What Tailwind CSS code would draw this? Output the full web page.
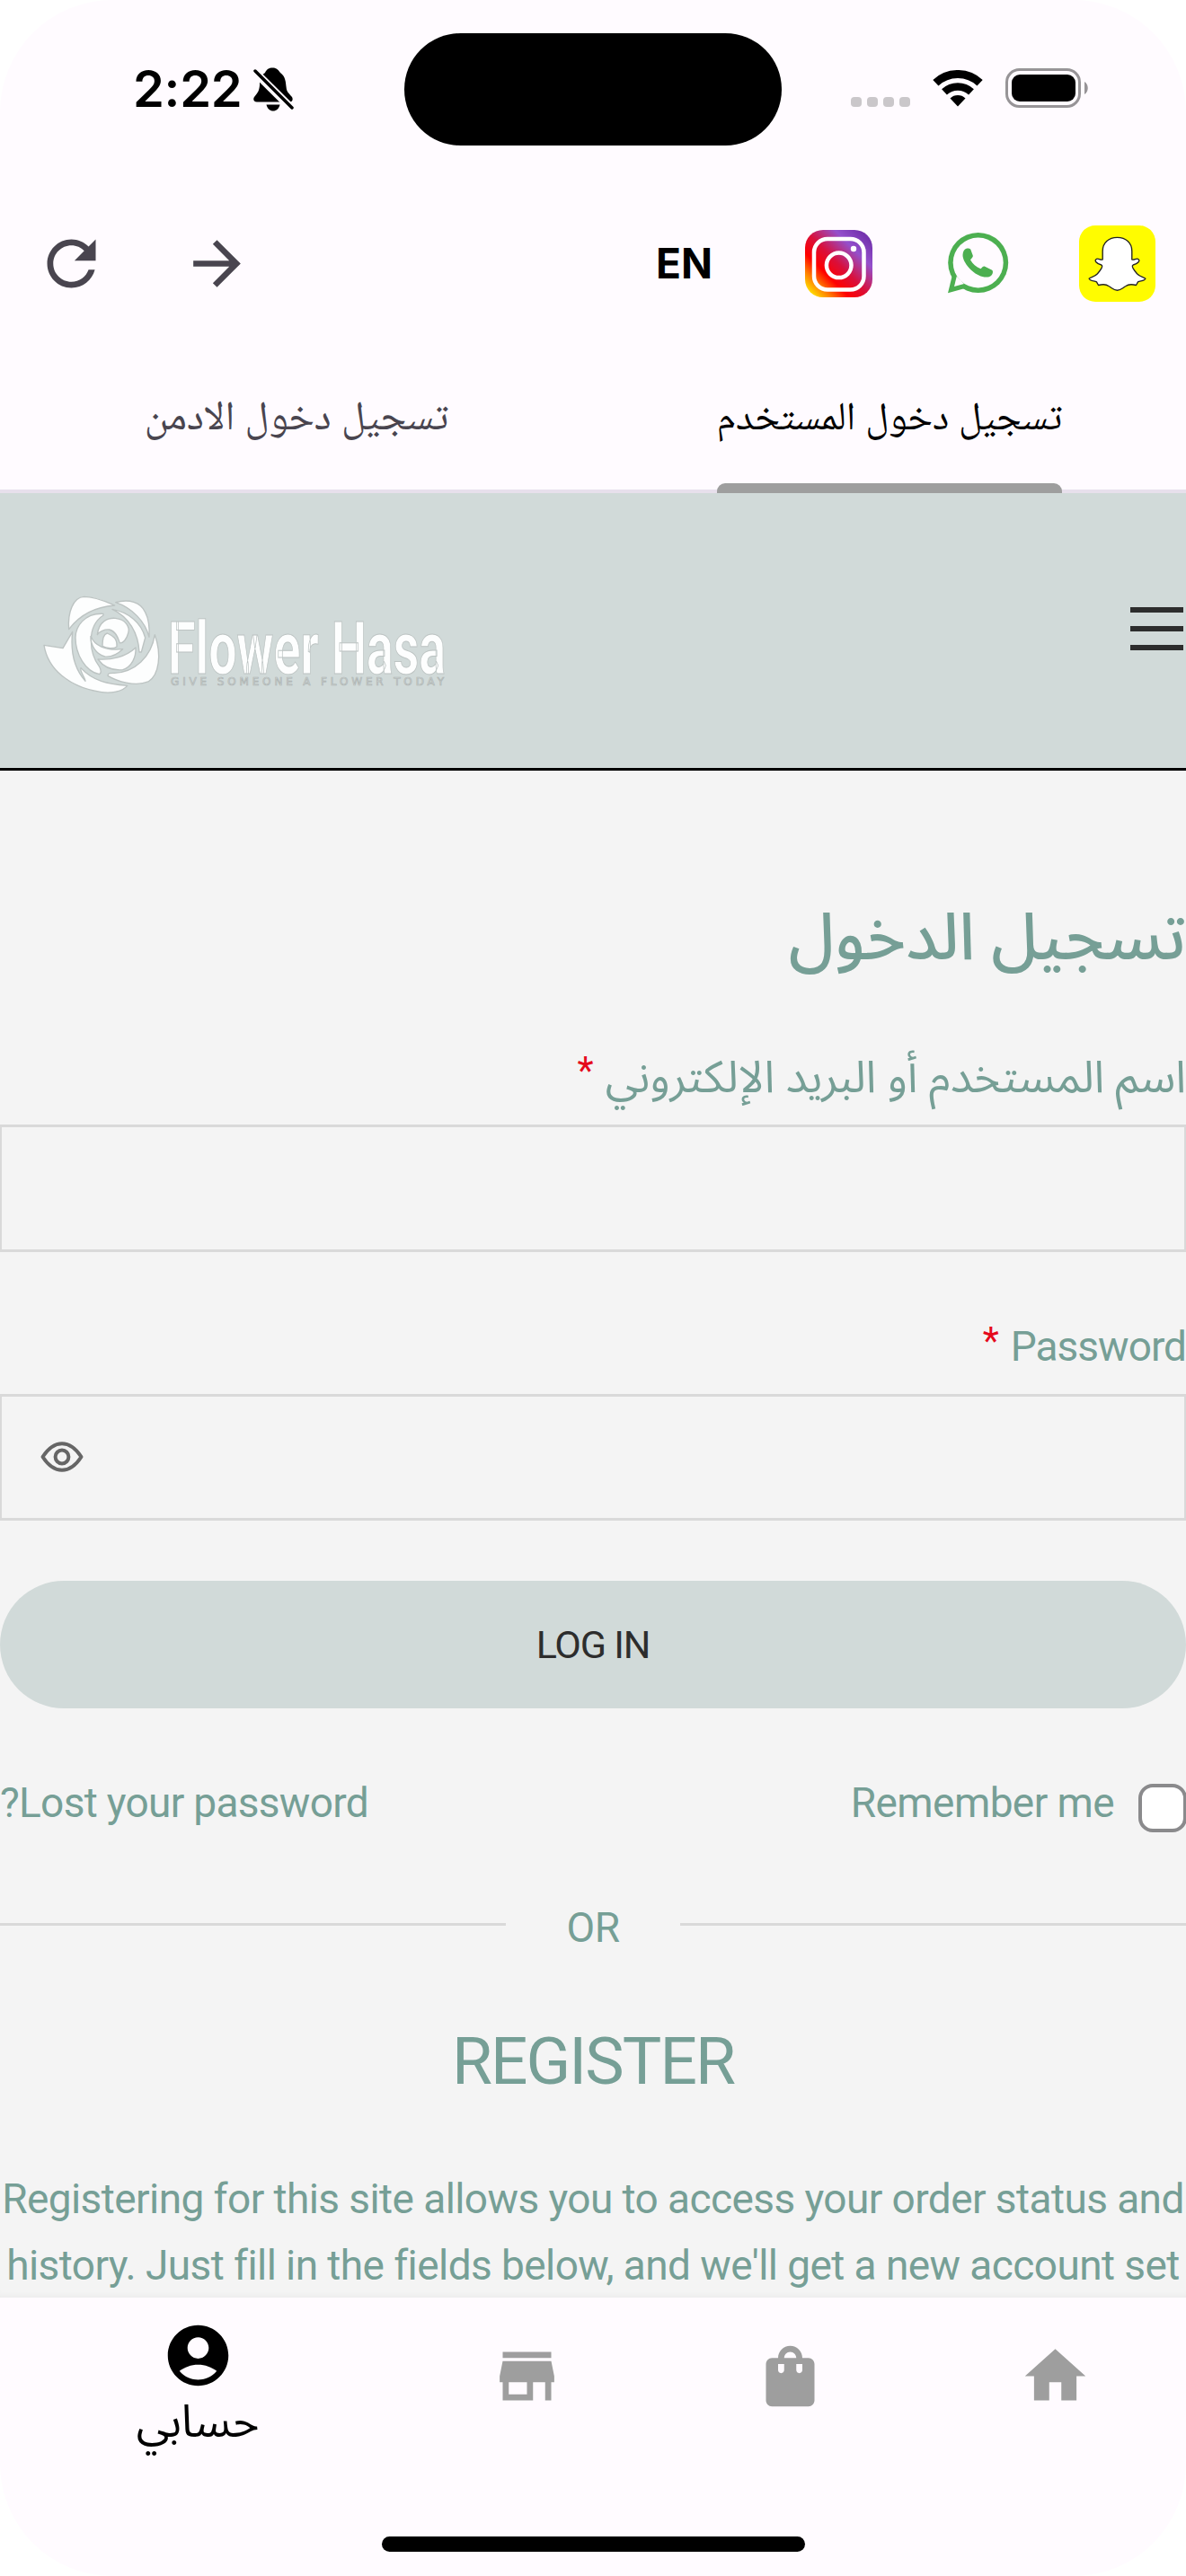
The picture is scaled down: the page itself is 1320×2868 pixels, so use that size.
<!DOCTYPE html>
<html lang="ar" dir="rtl">
<head>
  <meta charset="UTF-8">
  <title>Flower Hasa</title>
  <script src="https://cdn.jsdelivr.net/npm/@tailwindcss/browser@4"></script>
</head>
<body class="bg-white font-['Roboto','Noto_Sans_Arabic','DejaVu_Sans',sans-serif]">

  <div class="w-[1320px] h-[2868px] flex flex-col overflow-hidden rounded-[125px] bg-[#fffbff]">

    <!-- Status bar -->
    <div dir="ltr" class="h-[199px] shrink-0 flex items-center">
      <div class="w-[450px] pl-[148px] flex items-center">
        <span class="w-[134px] text-[56px] leading-[56px] font-semibold font-['Inter',sans-serif] tracking-[-0.3px] -mt-[2px]">2:22</span>
        <svg class="w-[46px] h-[50px]" viewBox="0 0 46 50">
          <path d="M21.5.5c4.500 0 6.500 2.500 8.500 5.500 6 4 6 11 6.600 16 .4 6 3.400 7 6.400 11 2 4-1 5.500-3 5.500H4c-4 0-4.500-3.500-3-5.500 4-5 5.500-7 6-13 0-8 1-11 6-14C15 2 17 .5 21.500 .5z"/>
          <path d="M14.500 41.500h15c-1 4.500-4 7-7.500 7s-6.500-2.500-7.500-7z"/>
          <path d="M-1 2.500 44 47" stroke="#fffbff" stroke-width="9"/>
          <path d="M2 4 43 45" stroke="#000" stroke-width="3.500" stroke-linecap="round"/>
        </svg>
      </div>
      <div class="w-[420px] h-[125px] rounded-full bg-black"></div>
      <div class="w-[450px] pl-[77px] flex items-center -mt-[3px]">
        <div class="flex gap-[6.500px] mt-[31px]">
          <i class="w-[11.5px] h-[11.5px] rounded-[4px] bg-[#cac7ca]"></i>
          <i class="w-[11.5px] h-[11.5px] rounded-[4px] bg-[#cac7ca]"></i>
          <i class="w-[11.5px] h-[11.5px] rounded-[4px] bg-[#cac7ca]"></i>
          <i class="w-[11.5px] h-[11.5px] rounded-[4px] bg-[#cac7ca]"></i>
        </div>
        <svg class="w-[56px] h-[41px] ml-[25px]" viewBox="0 0 56 41" fill="none" stroke="#000">
          <path d="M3.400 14.200a36 36 0 0 1 49.200 0" stroke-width="9"/>
          <path d="M13 24.400a22 22 0 0 1 30 0" stroke-width="8.500"/>
          <path d="M28 40.500l-8.500-9.100a12.500 12.500 0 0 1 17 0z" fill="#000" stroke="none"/>
        </svg>
        <svg class="w-[93px] h-[44px] ml-[25px]" viewBox="0 0 93 44">
          <rect x="1.500" y="1.500" width="81" height="41" rx="14" fill="none" stroke="#979497" stroke-width="3"/>
          <rect x="7" y="7" width="71" height="30" rx="9"/>
          <path d="M88 15c5 3 5 11 0 14z" fill="#979497"/>
        </svg>
      </div>
    </div>

    <!-- Toolbar -->
    <div dir="ltr" class="h-[188px] shrink-0 flex items-center pl-[39px] pr-[34px]">
      <svg class="w-[81px] h-[81px]" viewBox="0 0 24 24" fill="#49454f"><path d="M17.650 6.350C16.200 4.900 14.210 4 12 4c-4.420 0-7.990 3.580-7.990 8s3.570 8 7.990 8c3.730 0 6.840-2.550 7.730-6h-2.080c-.82 2.330-3.040 4-5.650 4-3.310 0-6-2.690-6-6s2.690-6 6-6c1.660 0 3.140.69 4.220 1.780L13 11h7V4l-2.350 2.350z"/></svg>
      <svg class="w-[79px] h-[79px] ml-[82px]" viewBox="0 0 24 24" fill="#49454f"><path d="M12 4l-1.410 1.410L16.170 11H4v2h12.170l-5.580 5.590L12 20l8-8z"/></svg>
      <span class="ml-auto mr-[103px] text-[46px] leading-none font-bold font-['Inter',sans-serif]">EN</span>
      <!-- Instagram -->
      <svg class="w-[75px] h-[75px]" viewBox="0 0 75 75" fill="none">
        <defs>
          <linearGradient id="insta" x1="0" y1="1" x2="1" y2="0">
            <stop offset="0.080" stop-color="#ffd800"/>
            <stop offset="0.200" stop-color="#ff7a00"/>
            <stop offset="0.330" stop-color="#ff0000"/>
            <stop offset="0.500" stop-color="#d8103c"/>
            <stop offset="0.720" stop-color="#9450cc"/>
            <stop offset="0.900" stop-color="#7434ae"/>
          </linearGradient>
        </defs>
        <rect width="75" height="75" rx="20" fill="url(#insta)"/>
        <rect x="10" y="10" width="55.500" height="56.500" rx="15" stroke="#fff" stroke-width="4.500"/>
        <circle cx="37.700" cy="39.300" r="13.800" stroke="#fff" stroke-width="4.500"/>
        <circle cx="54" cy="21" r="3.200" fill="#fff"/>
      </svg>
      <!-- WhatsApp -->
      <svg class="w-[68px] h-[68px] ml-[84px]" viewBox="0 0 68 68" fill="#4caf50">
        <circle cx="33.700" cy="33.500" r="33.500"/>
        <path d="M0 67.300 5 47l14 15z"/>
        <circle cx="33.700" cy="33.500" r="28" fill="#fffbff"/>
        <path d="M9.800 48.500 7 60l11-3z" fill="#fffbff"/>
        <path d="M16.500 25c0-4 2-6.500 4-7.200 2-.6 3.700-.3 4.700.7l2.600 7c.4 1.500-.8 2.500-2.800 4.700 2.500 4.500 6.500 8 11.500 10 2-2 3-3.500 4.700-2.500l8 4c1.300.8 1 4-.7 5.800-2.500 2.500-6.500 2.500-10 1.500C28 46.500 16.500 33.500 16.500 25z"/>
      </svg>
      <!-- Snapchat -->
      <svg class="w-[85px] h-[85px] ml-[78px]" viewBox="964 47 253 253">
        <rect x="964" y="47" width="253" height="253" rx="54" fill="#fffc00"/>
        <path d="M1090.500 87C1062 87 1042 105 1042 132L1042 160C1033 163 1030 155 1022 158C1012 163 1022 174 1038 178C1045 182 1035 195 1025 207C1015 218 1002 218 997 223C1000 232 1015 230 1022 234L1028 245C1040 242 1052 240 1062 248C1075 256 1080 262 1090.500 262C1101 262 1106 256 1119 248C1129 240 1141 242 1153 245L1159 234C1166 230 1181 232 1184 223C1179 218 1166 218 1156 207C1146 195 1136 182 1143 178C1159 174 1169 163 1159 158C1151 155 1148 163 1139 160L1139 132C1139 105 1119 87 1090.500 87Z" fill="#fff" stroke="#222" stroke-width="4" stroke-linejoin="round"/>
      </svg>
    </div>

    <!-- Tabs -->
    <div class="h-[162px] shrink-0 grid grid-cols-2 justify-items-center border-b-4 border-[#e7e0ec] text-[44px] leading-[152px] font-['Roboto','Noto_Naskh_Arabic','DejaVu_Sans',sans-serif]">
      <div class="relative text-black">تسجيل دخول المستخدم
        <span class="absolute inset-x-0 -bottom-1 h-[11px] rounded-t-[9px] bg-[#9e9e9e]"></span>
      </div>
      <div class="text-[#49454f] text-[45.5px]">تسجيل دخول الادمن</div>
    </div>

    <!-- Site header -->
    <div class="h-[309px] shrink-0 flex items-center justify-between bg-[#d1dad9] border-b-[3px] border-black pr-[3px] pl-[40px]">
      <div class="w-[59px] flex flex-col gap-[15px] -mt-[4px]">
        <span class="h-[6px] bg-[#2d2d2d]"></span>
        <span class="h-[6px] bg-[#2d2d2d]"></span>
        <span class="h-[6px] bg-[#2d2d2d]"></span>
      </div>
      <svg class="w-[460px] h-[125px] mt-[31px]" viewBox="0 0 460 125" direction="ltr">
        <g transform="scale(.3333)" fill="#fdfefe" stroke="#bcc3c2" stroke-width="4" stroke-linejoin="round">
          <path d="M110 137C105 80 125 30 160 28C200 28 235 45 263 57C200 62 145 90 110 137Z"/>
          <path d="M266 47C310 35 350 45 365 80C378 105 380 130 378 163C365 110 320 65 266 47Z"/>
          <path d="M255 70C310 80 352 115 365 165L352 213L345 213C342 150 310 95 255 70Z"/>
          <path d="M225 85C160 82 132 130 132 165C132 220 165 278 212 287C222 280 215 268 212 262C180 220 165 130 225 90Z"/>
          <path d="M27 190L90 200L122 145C115 210 125 265 165 310C165 300 145 275 150 266C190 310 240 320 305 325C290 345 250 352 215 346C110 330 40 270 27 190Z"/>
          <path d="M397 155C420 220 412 290 375 312C330 330 270 310 240 292C240 282 250 283 262 283C330 280 385 230 397 155Z"/>
          <path d="M205 155C210 110 240 98 265 100C300 103 315 130 308 150C303 170 290 185 280 182C275 170 270 145 245 138C230 136 210 145 205 155Z"/>
          <path d="M222 193C222 170 228 152 238 150C255 158 272 165 270 195C262 202 235 202 222 193Z"/>
          <path d="M183 160C195 190 230 210 290 203C270 222 250 230 230 228C200 220 182 190 183 160Z"/>
          <path d="M207 237C250 240 300 230 333 198C335 230 320 262 290 272C255 275 225 262 207 237Z"/>
        </g>
        <text x="147" y="94.500" font-size="82" font-weight="700" textLength="309" lengthAdjust="spacingAndGlyphs" fill="#fdfefe" stroke="#bcc3c2" stroke-width="1">Flower Hasa</text>
        <text x="150" y="108" font-size="12" textLength="304" fill="#d8dedd" stroke="#adb3b2" stroke-width=".7" font-family="DejaVu Sans">GIVE SOMEONE A FLOWER TODAY</text>
      </svg>
    </div>

    <!-- Login form -->
    <div class="h-[1700px] shrink-0 overflow-hidden bg-[#f4f4f4] text-[#769f96] text-[46px] leading-[74px] pt-[136px] shadow-[inset_0_-6px_6px_-4px_rgba(0,0,0,0.04)]">
      <h2 class="text-[72.5px] leading-[100px] font-medium">تسجيل الدخول</h2>

      <label class="flex gap-[13px] mt-[68px] text-[49.5px]">اسم المستخدم أو البريد الإلكتروني <span class="text-[#e50a1c] text-[42px] -mt-[7px]">*</span></label>
      <div class="mt-4 h-[142px] border-x-2 border-y-[3px] border-[#d9d9d9]"></div>

      <label class="flex gap-[14px] mt-[68px] h-[74px] tracking-[-1px]">Password <span class="text-[#e50a1c] text-[42px] -mt-[6px]">*</span></label>
      <div class="mt-4 h-[141px] border-x-2 border-y-[3px] border-[#d9d9d9] flex items-center justify-end pl-[43px]">
        <svg class="w-[48px] h-[34px] -mt-[2px]" viewBox="0 0 48 34" fill="none" stroke="#666" stroke-width="4">
          <path d="M2.500 17C9 7 16 2.200 24 2.200S39 7 45.500 17C39 27 32 31.800 24 31.800S9 27 2.500 17z" stroke-linejoin="round"/>
          <circle cx="24" cy="17" r="7.400"/>
        </svg>
      </div>

      <button class="mt-[67px] block w-full h-[142px] rounded-full bg-[#d1dad9] text-[#2d2d2d] text-[43px] leading-[143px] tracking-[-1.2px] text-center">LOG IN</button>

      <div class="mt-[68px] flex justify-between">
        <label class="flex items-center gap-[27px] tracking-[-0.6px]">
          <span class="w-[54px] h-[54px] -mr-px mt-[12px] rounded-[16px] border-4 border-[#8a8a8c] bg-white"></span>
          Remember me
        </label>
        <a class="tracking-[-0.7px]">Lost your password?</a>
      </div>

      <div class="mt-[65px] flex items-center">
        <span class="flex-1 h-[3px] bg-[#d9d9d9] -mt-[7px]"></span>
        <span class="w-[194px] text-center tracking-[-0.5px]">OR</span>
        <span class="flex-1 h-[3px] bg-[#d9d9d9] -mt-[7px]"></span>
      </div>

      <h2 class="mt-[62px] text-center text-[73px] leading-[100px] tracking-[-1.9px]">REGISTER</h2>
      <p dir="ltr" class="mt-[66px] text-center tracking-[-0.58px] whitespace-nowrap">Registering for this site allows you to access your order status and<br>history. Just fill in the fields below, and we'll get a new account set</p>
    </div>

    <!-- Bottom navigation -->
    <div class="flex-1 flex flex-col items-center text-[#9e9e9e]">
      <div class="w-full h-[266px] flex justify-end">
        <svg class="w-[81px] h-[81px] mt-[47px] ml-[108px]" viewBox="0 0 24 24" fill="currentColor"><path d="M10 20v-6h4v6h5v-8h3L12 3 2 12h3v8z"/></svg>
        <svg class="w-[81px] h-[81px] mt-[47px] mx-[106px]" viewBox="0 0 24 24" fill="currentColor"><path d="M18 6h-2c0-2.210-1.790-4-4-4S8 3.790 8 6H6c-1.100 0-2 .9-2 2v12c0 1.100.9 2 2 2h12c1.100 0 2-.9 2-2V8c0-1.100-.9-2-2-2zm-8 4c0 .55-.45 1-1 1s-1-.45-1-1V8h2v2zm2-6c1.100 0 2 .9 2 2h-4c0-1.100.9-2 2-2zm4 6c0 .55-.45 1-1 1s-1-.45-1-1V8h2v2z"/></svg>
        <svg class="w-[81px] h-[81px] mt-[47px] mx-[106px]" viewBox="0 0 24 24" fill="currentColor"><path d="M20 4H4v2h16V4zm1 10v-2l-1-5H4l-1 5v2h1v6h10v-6h4v6h2v-6h1zm-9 4H6v-4h6v4z"/></svg>
        <div class="w-[440px] flex flex-col items-center pt-[24px] text-black">
          <svg class="w-[81px] h-[81px]" viewBox="0 0 24 24" fill="currentColor"><path d="M12 2C6.480 2 2 6.480 2 12s4.480 10 10 10 10-4.480 10-10S17.520 2 12 2zm0 4c1.930 0 3.500 1.570 3.500 3.500S13.930 13 12 13s-3.500-1.570-3.500-3.500S10.070 6 12 6zm0 14c-2.030 0-4.430-.82-6.140-2.880C7.550 15.800 9.680 15 12 15s4.450.8 6.140 2.120C16.430 19.180 14.030 20 12 20z"/></svg>
          <span class="mt-[3px] text-[50px] leading-[60px]">حسابي</span>
        </div>
      </div>
      <div class="w-[471px] h-[17px] rounded-full bg-black"></div>
    </div>
  </div>
</body>
</html>
